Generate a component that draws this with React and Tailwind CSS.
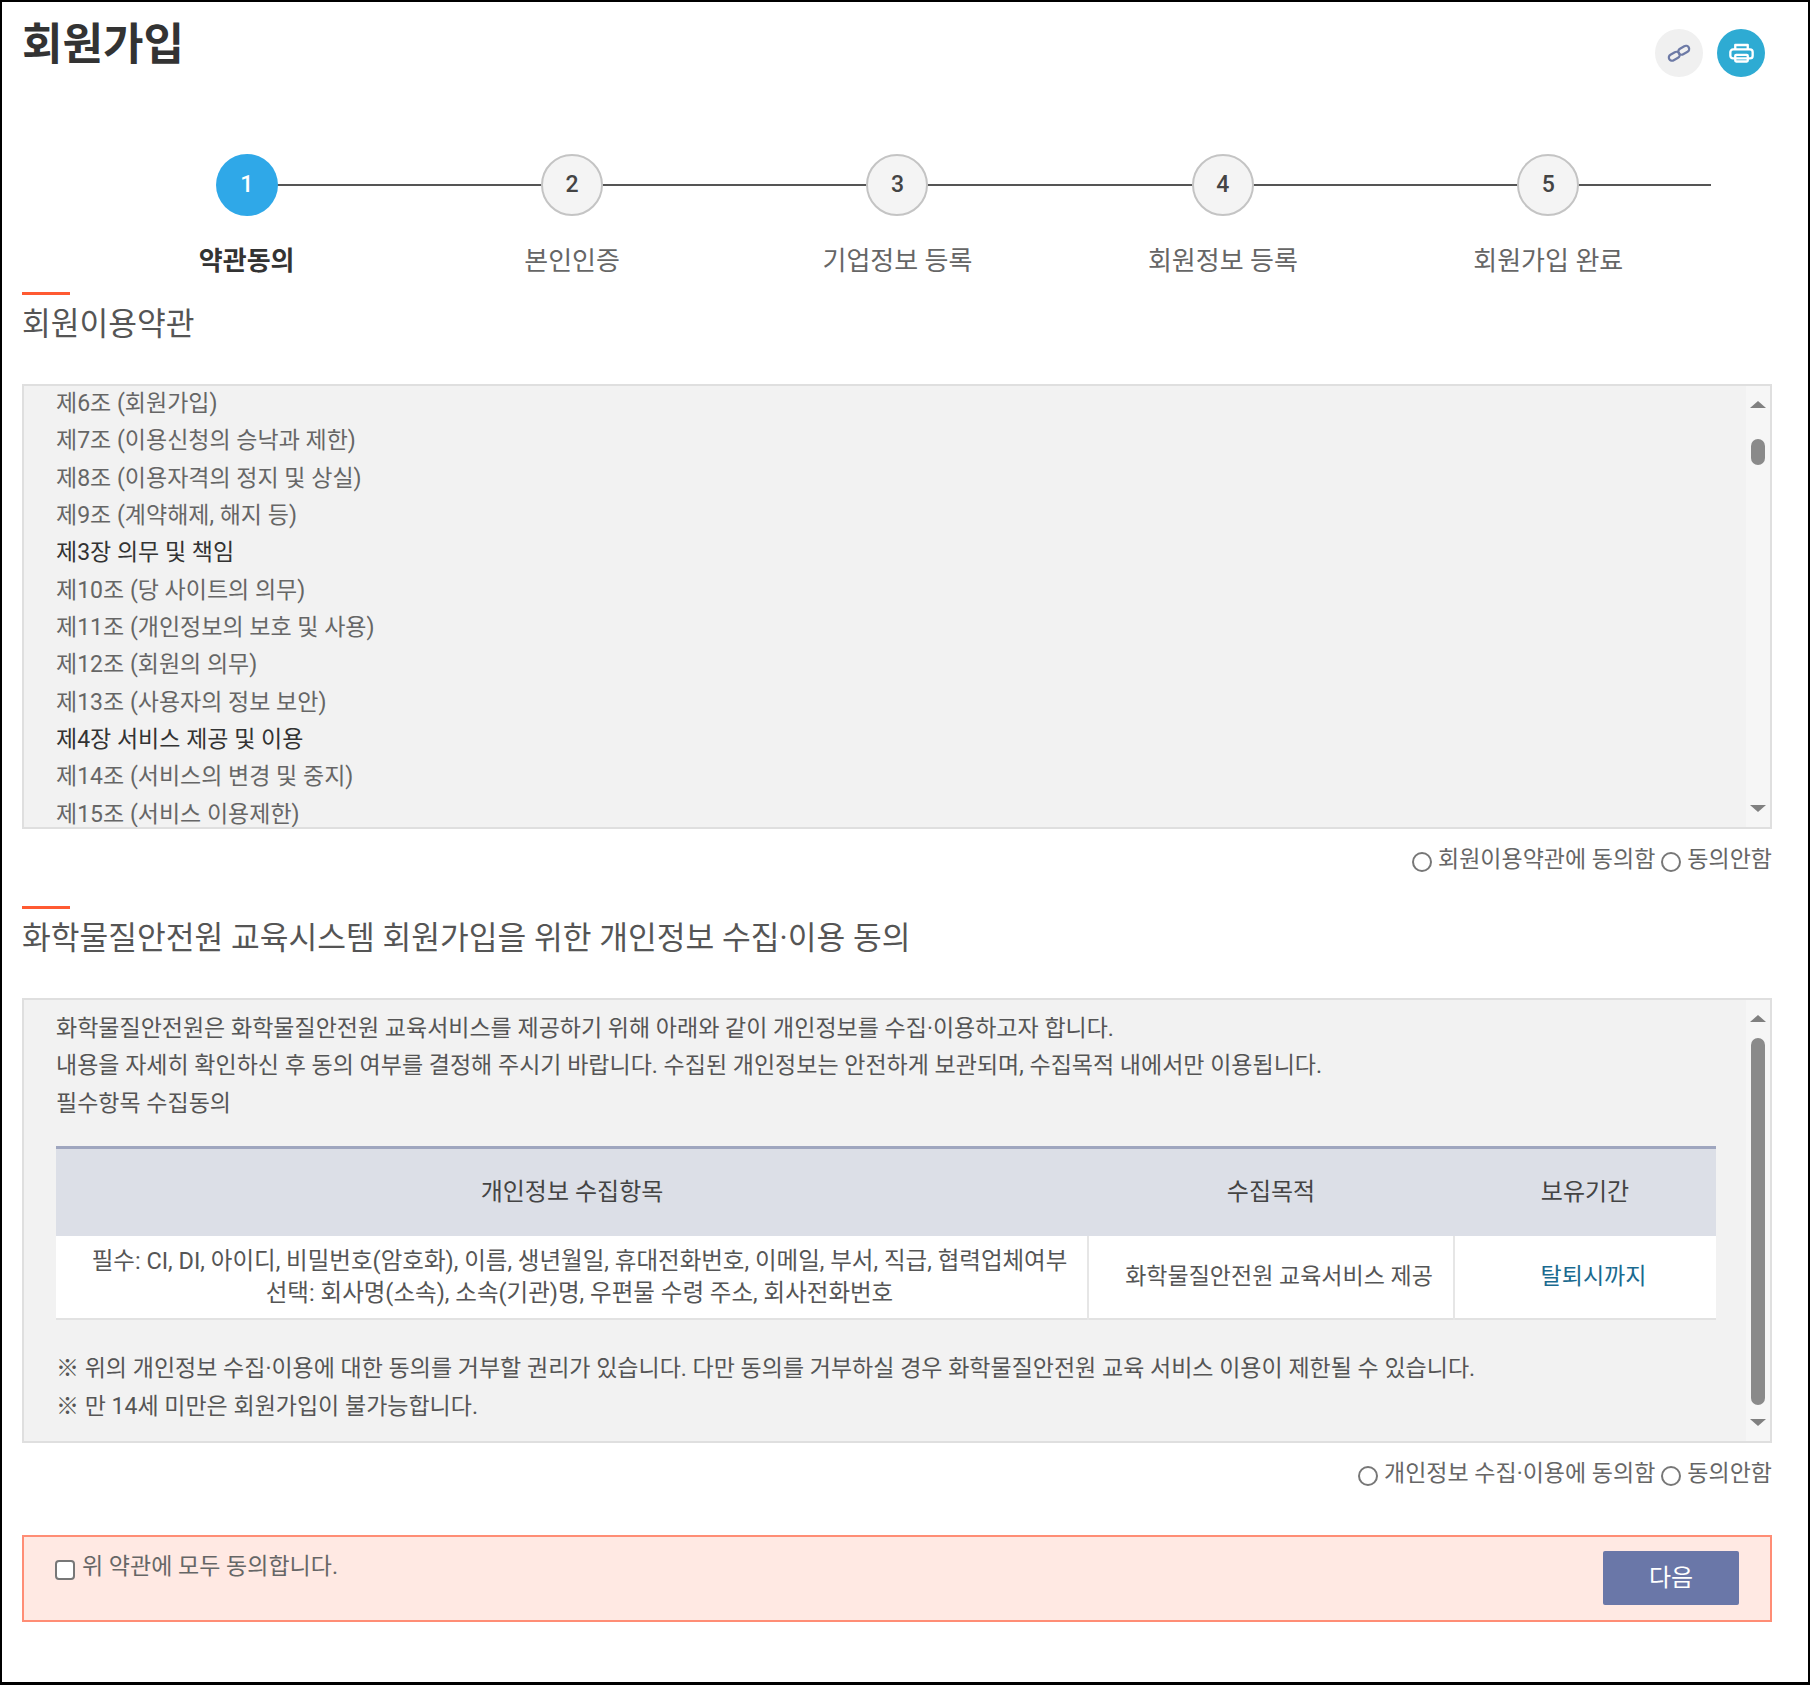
const FONT = "font-['Roboto','Noto_Sans_CJK_KR',sans-serif]"

const steps = [
  { no: 1, label: '약관동의' },
  { no: 2, label: '본인인증' },
  { no: 3, label: '기업정보 등록' },
  { no: 4, label: '회원정보 등록' },
  { no: 5, label: '회원가입 완료' },
]

const terms = [
  ['제6조 (회원가입)'],
  ['제7조 (이용신청의 승낙과 제한)'],
  ['제8조 (이용자격의 정지 및 상실)'],
  ['제9조 (계약해제, 해지 등)'],
  ['제3장 의무 및 책임', true],
  ['제10조 (당 사이트의 의무)'],
  ['제11조 (개인정보의 보호 및 사용)'],
  ['제12조 (회원의 의무)'],
  ['제13조 (사용자의 정보 보안)'],
  ['제4장 서비스 제공 및 이용', true],
  ['제14조 (서비스의 변경 및 중지)'],
  ['제15조 (서비스 이용제한)'],
]

function Scrollbar({ thumbTop, thumbHeight }) {
  return (
    <div className="relative w-[24px] shrink-0 bg-[#f6f6f6]">
      <div className="absolute left-[4px] top-[15px] h-0 w-0 border-x-[8px] border-b-[7px] border-x-transparent border-b-[#808080]" />
      <div className="absolute left-[5px] w-[14px] rounded-full bg-[#8a8a8a]" style={{ top: thumbTop, height: thumbHeight }} />
      <div className="absolute bottom-[15px] left-[4px] h-0 w-0 border-x-[8px] border-t-[7px] border-x-transparent border-t-[#808080]" />
    </div>
  )
}

function SectionTitle({ children }) {
  return (
    <div>
      <div className="h-[3px] w-[48px] bg-[#ff5a32]" />
      <h2 className="mt-[8px] text-[31.25px] leading-[44px] font-normal text-[#555]">{children}</h2>
    </div>
  )
}

function Radio({ label }) {
  return (
    <label className="flex items-center">
      <input type="radio" name="x" className="mt-[4px] h-[20px] w-[20px] appearance-none rounded-full border-2 border-[#777] bg-white" />
      <span className="ml-[6px]">{label}</span>
    </label>
  )
}

export default function App() {
  return (
    <div className={`${FONT} h-[1685px] w-[1810px] border-x-2 border-t-2 border-b-[3px] border-black bg-white pr-[36px] pl-[20px]`}>
      <div className="flex items-start justify-between">
        <h1 className="mt-[15px] text-[44px] leading-[56px] font-bold text-[#333]">회원가입</h1>
        <div className="mt-[27px] mr-[7px] flex gap-[14px]">
          <button className="flex h-[48px] w-[48px] items-center justify-center rounded-full bg-[#f0f0f0]">
            <svg width="26" height="26" viewBox="0 0 26 26" fill="none" stroke="#6d7aa6" strokeWidth="2.2">
              <rect x="2.5" y="13" width="11.5" height="6.5" rx="3.25" transform="rotate(-30 8.25 16.25)" />
              <rect x="12" y="7" width="11.5" height="6.5" rx="3.25" transform="rotate(-30 17.75 10.25)" />
            </svg>
          </button>
          <button className="flex h-[48px] w-[48px] items-center justify-center rounded-full bg-[#2eabd3]">
            <svg width="25" height="20" viewBox="0 0 28 22" fill="none" stroke="#fff" strokeWidth="2.6" strokeLinejoin="round">
              <path d="M7 7V2h14v5" />
              <rect x="1.5" y="7" width="25" height="10" rx="3" />
              <rect x="7" y="13" width="14" height="7.5" rx="1" />
            </svg>
          </button>
        </div>
      </div>

      <div className="relative mt-[77px] flex h-[138px] pl-[62px]">
        <div className="absolute top-[30px] left-[253px] h-[2px] w-[1436px] bg-[#555]" />
        {steps.map((s) => (
          <div key={s.no} className="relative flex w-[325.4px] flex-col items-center">
            <div className={`flex h-[62px] w-[62px] items-center justify-center rounded-full text-[23px] font-medium ${s.no === 1 ? 'bg-[#2fa8e8] text-white' : 'border-2 border-[#c4c4c4] bg-[#f4f4f4] text-[#444]'}`}>{s.no}</div>
            <div className={`mt-[27px] text-[26px] leading-[36px] whitespace-nowrap ${s.no === 1 ? 'font-bold text-[#333]' : 'text-[#666]'}`}>{s.label}</div>
          </div>
        ))}
      </div>

      <SectionTitle>회원이용약관</SectionTitle>

      <div className="mt-[37px] flex h-[445px] border-2 border-[#dfdfdf] bg-[#f2f2f2]">
        <div className="-mt-[1px] flex-1 overflow-hidden pl-[32px] text-[23px] leading-[37.33px] text-[#666]">
          {terms.map(([t, bold]) => (
            <div key={t} className={bold ? 'text-[#333]' : ''}>{t}</div>
          ))}
        </div>
        <Scrollbar thumbTop={53} thumbHeight={26} />
      </div>

      <div className="mt-[13px] flex h-[36px] items-center justify-end gap-[6px] text-[23px] text-[#666]">
        <Radio label="회원이용약관에 동의함" />
        <Radio label="동의안함" />
      </div>

      <div className="mt-[28px]">
        <SectionTitle>화학물질안전원 교육시스템 회원가입을 위한 개인정보 수집·이용 동의</SectionTitle>
      </div>

      <div className="mt-[37px] flex h-[445px] border-2 border-[#dfdfdf] bg-[#f2f2f2]">
        <div className="flex-1 pt-[10px] pl-[32px] text-[23px] leading-[37.33px] text-[#555]">
          <p>화학물질안전원은 화학물질안전원 교육서비스를 제공하기 위해 아래와 같이 개인정보를 수집·이용하고자 합니다.</p>
          <p>내용을 자세히 확인하신 후 동의 여부를 결정해 주시기 바랍니다. 수집된 개인정보는 안전하게 보관되며, 수집목적 내에서만 이용됩니다.</p>
          <p>필수항목 수집동의</p>

          <table className="mt-[24px] w-[1660px] table-fixed border-t-[3px] border-[#9fa6bf] text-center">
            <colgroup>
              <col className="w-[1032px]" />
              <col className="w-[366px]" />
              <col className="w-[262px]" />
            </colgroup>
            <thead>
              <tr className="h-[89px] bg-[#dcdfe7] text-[#444]">
                <th className="text-[24px] font-normal">개인정보 수집항목</th>
                <th className="text-[24px] font-normal">수집목적</th>
                <th className="text-[24px] font-normal">보유기간</th>
              </tr>
            </thead>
            <tbody className="bg-white">
              <tr className="h-[83px] border-b-2 border-[#e2e2e2] leading-[32px]">
                <td className="pl-[16px] text-[23.5px]">
                  필수: CI, DI, 아이디, 비밀번호(암호화), 이름, 생년월일, 휴대전화번호, 이메일, 부서, 직급, 협력업체여부<br />
                  선택: 회사명(소속), 소속(기관)명, 우편물 수령 주소, 회사전화번호
                </td>
                <td className="border-l-2 border-[#e6e6e6] pl-[16px]">화학물질안전원 교육서비스 제공</td>
                <td className="border-l-2 border-[#e6e6e6] pl-[16px] text-[#1a6a8f]">탈퇴시까지</td>
              </tr>
            </tbody>
          </table>

          <p className="mt-[30px]">※ 위의 개인정보 수집·이용에 대한 동의를 거부할 권리가 있습니다. 다만 동의를 거부하실 경우 화학물질안전원 교육 서비스 이용이 제한될 수 있습니다.</p>
          <p>※ 만 14세 미만은 회원가입이 불가능합니다.</p>
        </div>
        <Scrollbar thumbTop={38} thumbHeight={367} />
      </div>

      <div className="mt-[13px] flex h-[36px] items-center justify-end gap-[6px] text-[23px] text-[#666]">
        <Radio label="개인정보 수집·이용에 동의함" />
        <Radio label="동의안함" />
      </div>

      <div className="mt-[43px] flex h-[87px] items-start justify-between border-2 border-[#ff8d75] bg-[#ffe9e3] pt-[14px] pr-[31px] pl-[31px]">
        <label className="flex items-center text-[23px] leading-[32px] text-[#666]">
          <input type="checkbox" className="mt-[6px] h-[20px] w-[20px] appearance-none rounded-[4px] border-2 border-[#777] bg-white" />
          <span className="ml-[7px]">위 약관에 모두 동의합니다.</span>
        </label>
        <button className="h-[54px] w-[136px] rounded-[2px] bg-[#6a77a8] text-[24px] text-white">다음</button>
      </div>
    </div>
  )
}
